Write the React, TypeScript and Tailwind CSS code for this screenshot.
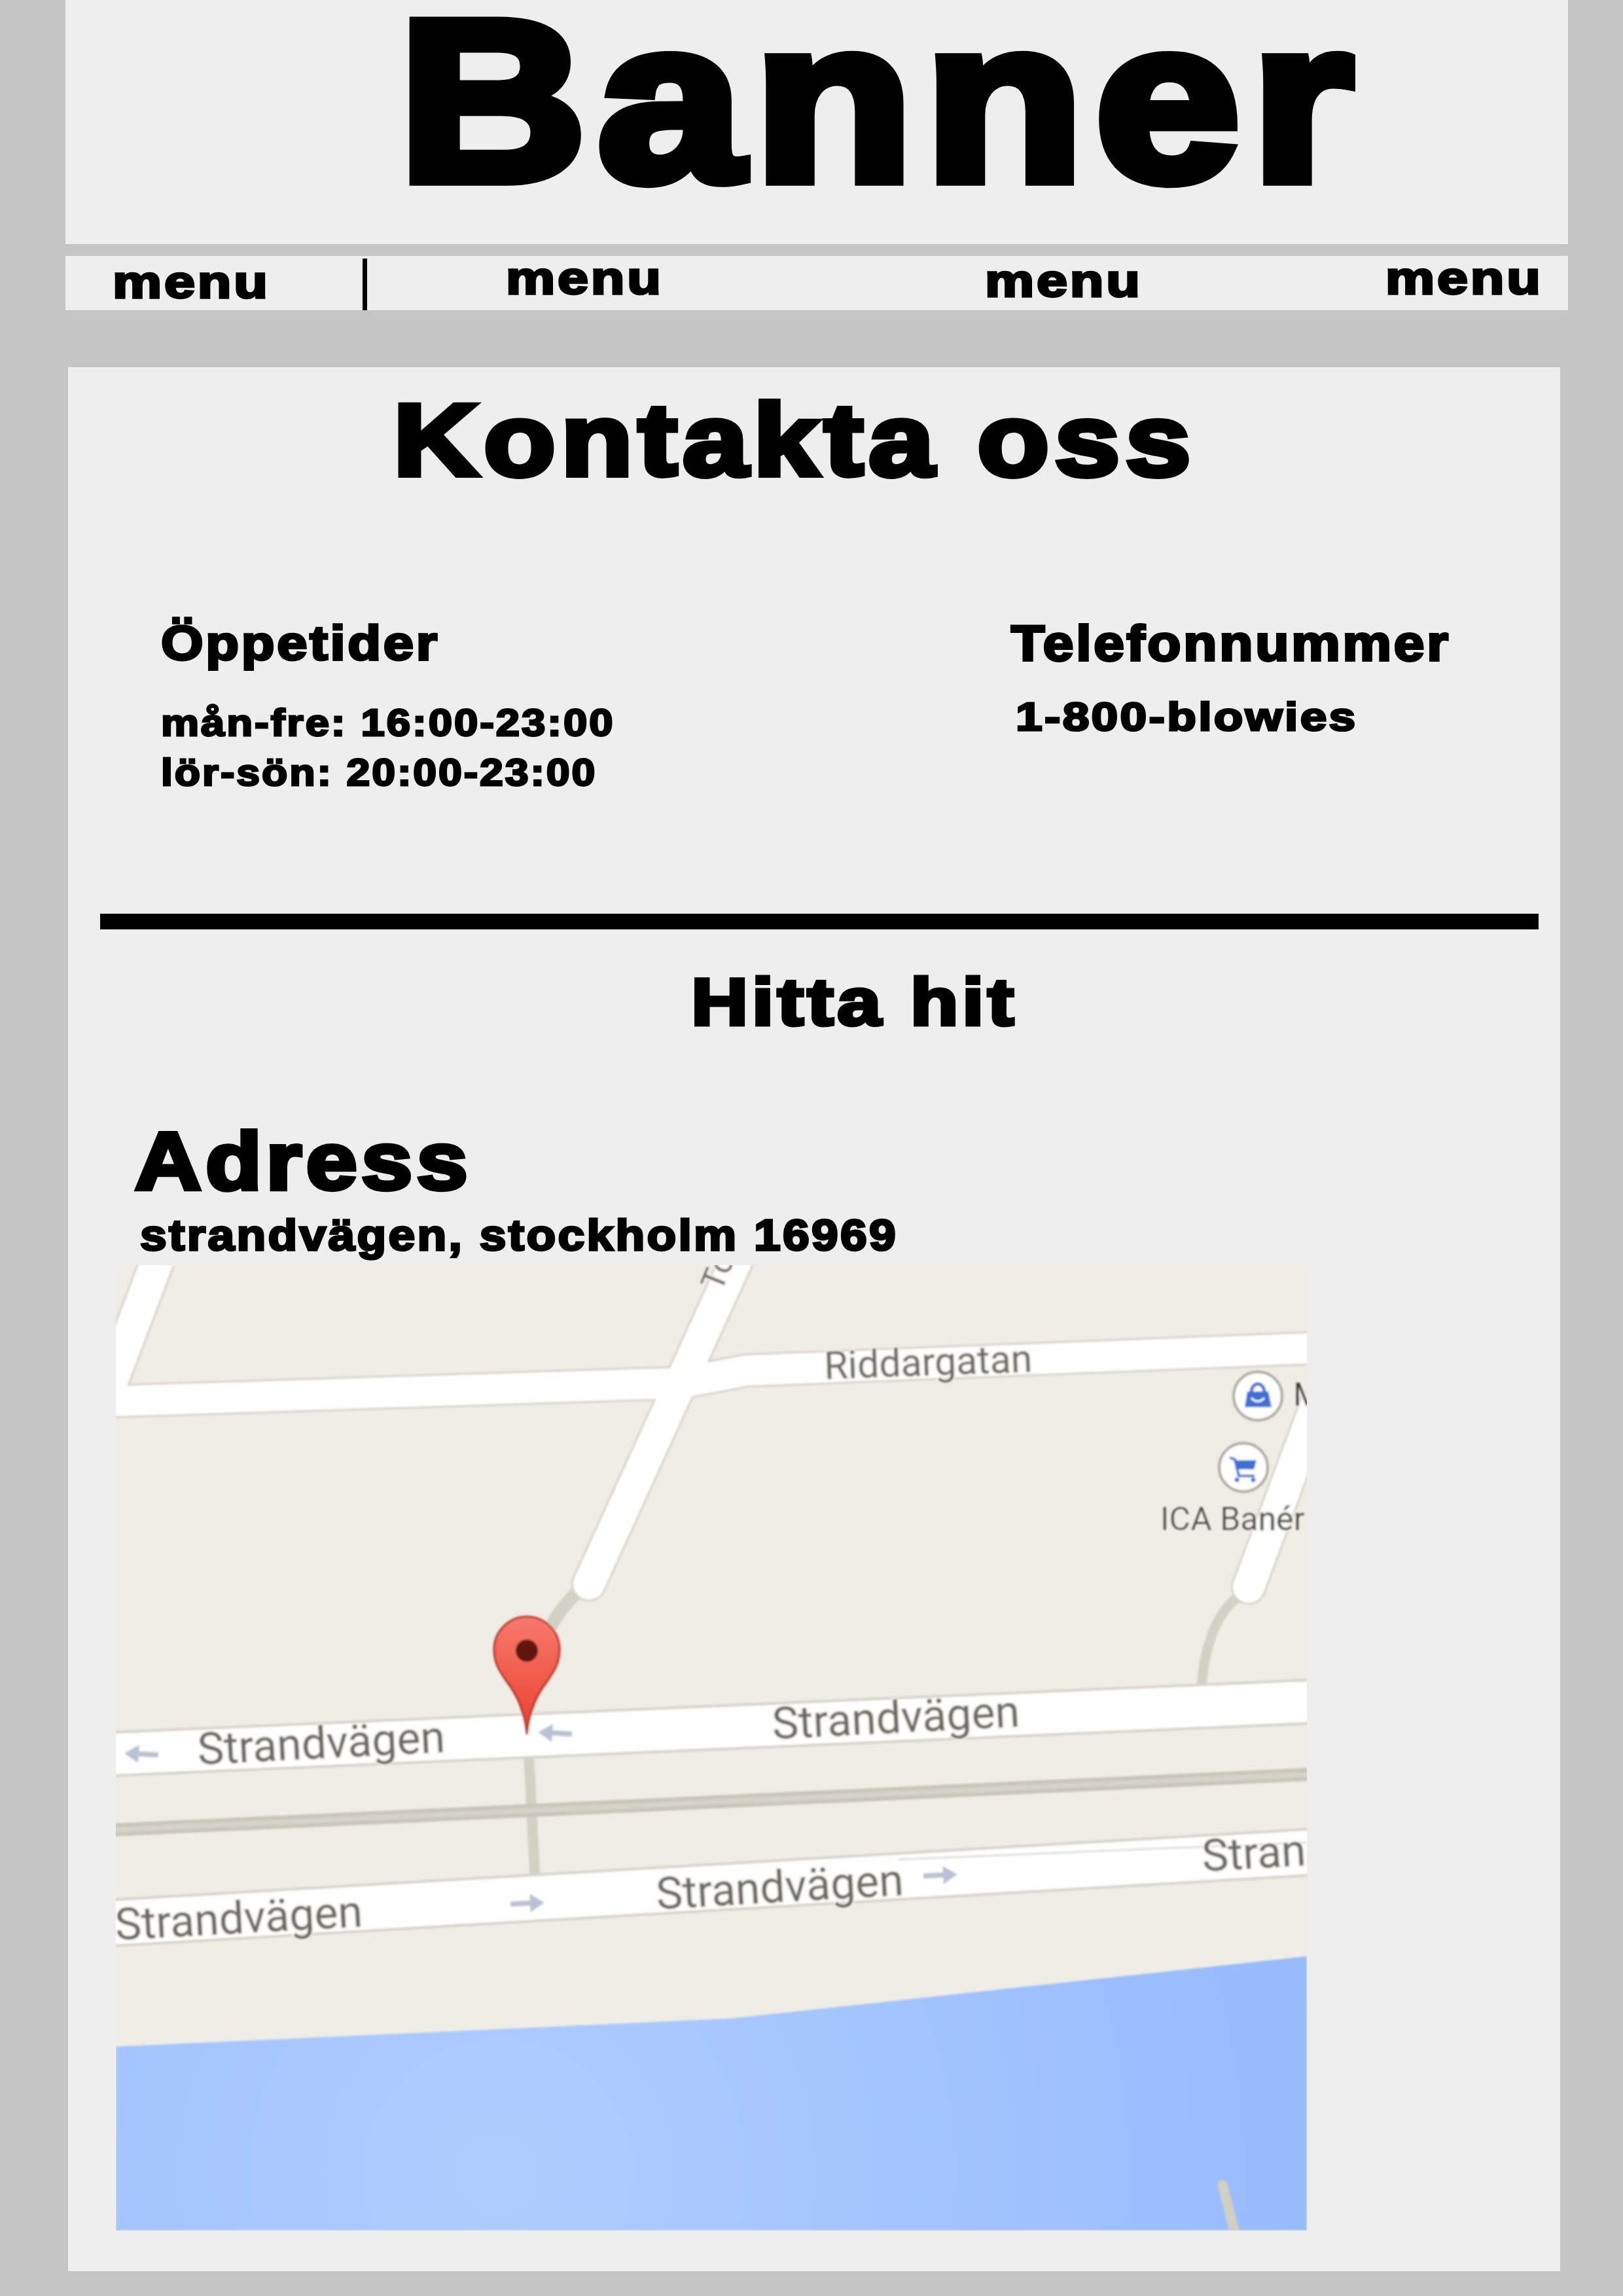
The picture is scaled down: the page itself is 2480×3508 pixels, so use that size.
const heavy = "w-fit origin-left font-bold text-black whitespace-nowrap tracking-[0.045em] [-webkit-text-stroke:0.05em_black] font-['Liberation_Sans',Arial,sans-serif]";

function Arrow({ x, y, dir }: { x: number; y: number; dir: 1 | -1 }) {
  return (
    <g transform={`translate(${x} ${y}) scale(${dir} 1) rotate(-3)`} fill="#b9c2d2">
      <rect x={-26} y={-4} width={30} height={8} />
      <polygon points="26,0 4,-14 4,14" />
    </g>
  );
}

function Label({ x, y, a, size = 68, children }: { x: number; y: number; a: number; size?: number; children: string }) {
  return (
    <text
      x={x}
      y={y}
      transform={`rotate(${a} ${x} ${y})`}
      fontSize={size}
      fill="#6c6962"
      stroke="#f5f4ef"
      strokeWidth={4}
      paintOrder="stroke"
      className="font-['Roboto',sans-serif]"
    >
      {children}
    </text>
  );
}

function MapPicture() {
  return (
    <svg viewBox="177 1933 1820 1475" className="block w-[1820px] h-[1475px]">
      <defs>
        <radialGradient id="water" gradientUnits="userSpaceOnUse" cx="760" cy="3320" r="1550">
          <stop offset="0" stopColor="#aecdfe" />
          <stop offset="1" stopColor="#92b6fc" />
        </radialGradient>
        <linearGradient id="pin" x1="0" y1="0" x2="0" y2="1">
          <stop offset="0" stopColor="#f8796c" />
          <stop offset="1" stopColor="#ea3f2c" />
        </linearGradient>
        <filter id="soft">
          <feGaussianBlur stdDeviation="1.5" />
        </filter>
      </defs>
      <rect x="177" y="1933" width="1820" height="1475" fill="#efede5" />
      <g filter="url(#soft)">
        <polygon points="177,3127 1117,3084 1997,2989 1997,3408 177,3408" fill="url(#water)" />
        <line x1="1868" y1="3338" x2="1889" y2="3420" stroke="#d2cfc3" strokeWidth="15" strokeLinecap="round" />

        <path d="M890 2425 Q850 2460 830 2510" fill="none" stroke="#d3d1c5" strokeWidth="20" />
        <path d="M1898 2435 Q1845 2470 1836 2575" fill="none" stroke="#d3d1c5" strokeWidth="15" />
        <line x1="808" y1="2680" x2="818" y2="2880" stroke="#d3d1c5" strokeWidth="16" />
        <line x1="170" y1="2796" x2="2000" y2="2711" stroke="#c9c6b9" strokeWidth="20" />
        <line x1="170" y1="2796" x2="2000" y2="2711" stroke="#d6d3c8" strokeWidth="8" />

        <line x1="241" y1="1925" x2="165" y2="2125" stroke="#d6d3c8" strokeWidth="55" />
        <polyline points="170,2141 1040,2113 1141,2094 2000,2060" fill="none" stroke="#d6d3c8" strokeWidth="52" />
        <line x1="1128" y1="1920" x2="900" y2="2420" stroke="#d6d3c8" strokeWidth="54" strokeLinecap="round" />
        <line x1="2010" y1="2150" x2="1908" y2="2425" stroke="#d6d3c8" strokeWidth="54" strokeLinecap="round" />

        <line x1="241" y1="1925" x2="165" y2="2125" stroke="#ffffff" strokeWidth="49" />
        <polyline points="170,2141 1040,2113 1141,2094 2000,2060" fill="none" stroke="#ffffff" strokeWidth="46" />
        <line x1="1128" y1="1920" x2="900" y2="2420" stroke="#ffffff" strokeWidth="48" strokeLinecap="round" />
        <line x1="2010" y1="2150" x2="1908" y2="2425" stroke="#ffffff" strokeWidth="48" strokeLinecap="round" />

        <line x1="170" y1="2680" x2="2000" y2="2600" stroke="#d6d3c8" strokeWidth="70" />
        <line x1="170" y1="2680" x2="2000" y2="2600" stroke="#ffffff" strokeWidth="62" />
        <line x1="170" y1="2938" x2="2000" y2="2830" stroke="#d6d3c8" strokeWidth="74" />
        <line x1="170" y1="2938" x2="2000" y2="2830" stroke="#ffffff" strokeWidth="66" />
        <line x1="1372" y1="2841" x2="1997" y2="2815" stroke="#dcdde0" strokeWidth="3" />

        <Arrow x={216} y={2680} dir={-1} />
        <Arrow x={848} y={2648} dir={-1} />
        <Arrow x={806} y={2908} dir={1} />
        <Arrow x={1437} y={2865} dir={1} />

        <Label x={303} y={2696} a={-2.9}>Strandvägen</Label>
        <Label x={1181} y={2657} a={-2.9}>Strandvägen</Label>
        <Label x={177} y={2964} a={-3.1}>Strandvägen</Label>
        <Label x={1004} y={2917} a={-3.3}>Strandvägen</Label>
        <Label x={1838} y={2859} a={-3.3}>Stran</Label>
        <Label x={1260} y={2107} a={-2} size={59}>Riddargatan</Label>
        <Label x={1102} y={1975} a={-68} size={50}>Tor</Label>

        <circle cx="1922" cy="2133" r="37" fill="#ffffff" stroke="#aaa8a0" strokeWidth="4" />
        <path d="M1912 2128 C1912 2110 1932 2110 1932 2128" fill="none" stroke="#3a6fd6" strokeWidth="5" />
        <polygon points="1906,2126 1938,2126 1943,2150 1902,2150" fill="#3a6fd6" />
        <path d="M1912 2136 Q1922 2146 1932 2136" fill="none" stroke="#ffffff" strokeWidth="3" />

        <circle cx="1900" cy="2242" r="37" fill="#ffffff" stroke="#aaa8a0" strokeWidth="4" />
        <polyline points="1879,2227 1887,2230 1893,2255 1917,2255" fill="none" stroke="#3a6fd6" strokeWidth="4" />
        <polygon points="1888,2231 1920,2231 1916,2245 1891,2245" fill="#3a6fd6" />
        <circle cx="1890" cy="2261" r="3.5" fill="#3a6fd6" />
        <circle cx="1915" cy="2261" r="3.5" fill="#3a6fd6" />

        <text x="1773" y="2338" fontSize="50" fill="#4c4c4a" stroke="#f5f4ef" strokeWidth="4" paintOrder="stroke" className="font-['Roboto',sans-serif]">ICA Banér</text>
        <text x="1976" y="2148" fontSize="50" fill="#3a3a38" stroke="#f5f4ef" strokeWidth="4" paintOrder="stroke" className="font-['Roboto',sans-serif]">M</text>

        <path
          d="M805 2650 C800 2610 790 2590 775 2570 C762 2552 755 2540 755 2520 C755 2492 778 2470 805 2470 C832 2470 855 2492 855 2520 C855 2540 848 2552 835 2570 C820 2590 810 2610 805 2650 Z"
          fill="url(#pin)"
          stroke="#b8362a"
          strokeWidth="3"
        />
        <circle cx="805" cy="2522" r="17" fill="#5e1408" />
      </g>
    </svg>
  );
}

export default function App() {
  return (
    <div className="w-[2480px] h-[3508px] bg-[#c5c5c5] overflow-hidden">
      <header className="ml-[100px] w-[2296px] h-[373px] bg-[#eeeeee] pl-[509px]">
        <div className={`${heavy} scale-x-[1.135] text-[350px] leading-[307px]`}>Banner</div>
      </header>

      <nav className="mt-[18px] ml-[100px] w-[2296px] h-[83px] bg-[#eeeeee] flex items-start">
        <div className="w-[454px] pl-[72px] pt-[6px]">
          <div className={`${heavy} scale-x-[1.19] text-[71px] leading-[68px]`}>menu</div>
        </div>
        <div className="w-[7px] h-[79px] mt-[4px] bg-black" />
        <div className="w-[944px] pl-[212px]">
          <div className={`${heavy} scale-x-[1.19] text-[71px] leading-[68px]`}>menu</div>
        </div>
        <div className="w-[612px] pt-[4px]">
          <div className={`${heavy} scale-x-[1.19] text-[71px] leading-[68px]`}>menu</div>
        </div>
        <div>
          <div className={`${heavy} scale-x-[1.19] text-[71px] leading-[68px]`}>menu</div>
        </div>
      </nav>

      <main className="mt-[87px] ml-[104px] w-[2280px] h-[2909px] bg-[#eeeeee]">
        <div className="pl-[497px]">
          <h1 className={`${heavy} scale-x-[1.153] text-[156px] leading-[222px]`}>Kontakta oss</h1>
        </div>

        <div className="mt-[161px] h-[452px] flex items-start">
          <div className="w-[1441px] pl-[142px]">
            <div className={`${heavy} scale-x-[1.107] text-[75px] leading-[76px] mb-[2px]`}>Öppetider</div>
            <div className={`${heavy} scale-x-[1.125] mt-[46px] text-[58px] leading-[76px]`}>mån-fre: 16:00-23:00</div>
            <div className={`${heavy} scale-x-[1.11] text-[58px] leading-[76px]`}>lör-sön: 20:00-23:00</div>
          </div>
          <div className="pt-px">
            <div className={`${heavy} scale-x-[1.103] text-[76px] leading-[76px]`}>Telefonnummer</div>
            <div className={`${heavy} scale-x-[1.18] mt-[36px] ml-[7px] text-[62px] leading-[76px]`}>1-800-blowies</div>
          </div>
        </div>

        <div className="ml-[49px] w-[2198px] h-[24px] bg-black" />

        <div className="mt-[42px] pl-[952px]">
          <h2 className={`${heavy} scale-x-[1.185] text-[102px] leading-[138px]`}>Hitta hit</h2>
        </div>
        <div className="mt-[110px] pl-[102px]">
          <h2 className={`${heavy} scale-x-[1.126] text-[125px] leading-[128px]`}>Adress</h2>
        </div>
        <div className="mt-[13px] pl-[110px]">
          <p className={`${heavy} scale-x-[1.109] text-[66px] leading-[72px]`}>strandvägen, stockholm 16969</p>
        </div>

        <div className="mt-[10px] ml-[73px] w-[1820px]">
          <MapPicture />
        </div>
      </main>
    </div>
  );
}
